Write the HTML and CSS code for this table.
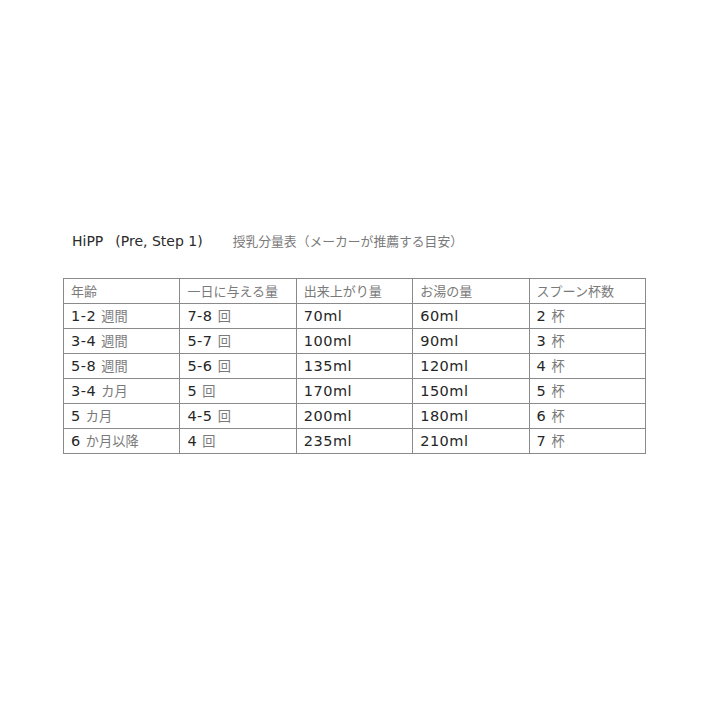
FILE: index.html
```html
<!DOCTYPE html>
<html lang="ja">
<head>
<meta charset="utf-8">
<title>HiPP 授乳分量表</title>
<link rel="stylesheet" href="styles.css">
</head>
<body>
<main class="page">
  <h1 class="title">
    <span class="brand">HiPP</span><span class="step">(Pre, Step 1)</span><span class="ja title-ja">授乳分量表（メーカーが推薦する目安）</span>
  </h1>
  <table class="chart">
    <thead>
      <tr>
        <th><span class="ja">年齢</span></th>
        <th><span class="ja">一日に与える量</span></th>
        <th><span class="ja">出来上がり量</span></th>
        <th><span class="ja">お湯の量</span></th>
        <th><span class="ja">スプーン杯数</span></th>
      </tr>
    </thead>
    <tbody>
      <tr><td>1-2 <span class="ja">週間</span></td><td>7-8 <span class="ja">回</span></td><td>70ml</td><td>60ml</td><td>2 <span class="ja">杯</span></td></tr>
      <tr><td>3-4 <span class="ja">週間</span></td><td>5-7 <span class="ja">回</span></td><td>100ml</td><td>90ml</td><td>3 <span class="ja">杯</span></td></tr>
      <tr><td>5-8 <span class="ja">週間</span></td><td>5-6 <span class="ja">回</span></td><td>135ml</td><td>120ml</td><td>4 <span class="ja">杯</span></td></tr>
      <tr><td>3-4 <span class="ja">カ月</span></td><td>5 <span class="ja">回</span></td><td>170ml</td><td>150ml</td><td>5 <span class="ja">杯</span></td></tr>
      <tr><td>5 <span class="ja">カ月</span></td><td>4-5 <span class="ja">回</span></td><td>200ml</td><td>180ml</td><td>6 <span class="ja">杯</span></td></tr>
      <tr><td>6 <span class="ja">か月以降</span></td><td>4 <span class="ja">回</span></td><td>235ml</td><td>210ml</td><td>7 <span class="ja">杯</span></td></tr>
    </tbody>
  </table>
</main>
</body>
</html>
```

FILE: styles.css
```css
html, body {
  margin: 0;
  padding: 0;
  background: #ffffff;
}

.page {
  padding: 231px 0 0 63px;
  font-family: "DejaVu Sans", "Noto Sans CJK JP", sans-serif;
  color: #2a2a2a;
}

.title {
  margin: 0 0 27px 9px;
  font-size: 14px;
  font-weight: normal;
  line-height: 20px;
  white-space: nowrap;
}

.brand {
  margin-right: 12px;
}

.step {
  margin-right: 30px;
}

.ja {
  font-family: "Noto Sans CJK JP", sans-serif;
  color: #7a7a7a;
  letter-spacing: 0;
}

.title-ja {
  font-size: 12.8px;
}

.chart {
  border-collapse: collapse;
  table-layout: fixed;
  width: 583px;
  font-size: 14.5px;
  letter-spacing: 0.5px;
  color: #262626;
}

.chart .ja {
  font-size: 13.2px;
}

.chart th .ja {
  font-size: 13px;
}

.chart th,
.chart td {
  border: 1px solid #8a8a8a;
  height: 23px;
  padding: 0 0 0 7px;
  text-align: left;
  font-weight: normal;
  line-height: 23px;
  white-space: nowrap;
}
```
